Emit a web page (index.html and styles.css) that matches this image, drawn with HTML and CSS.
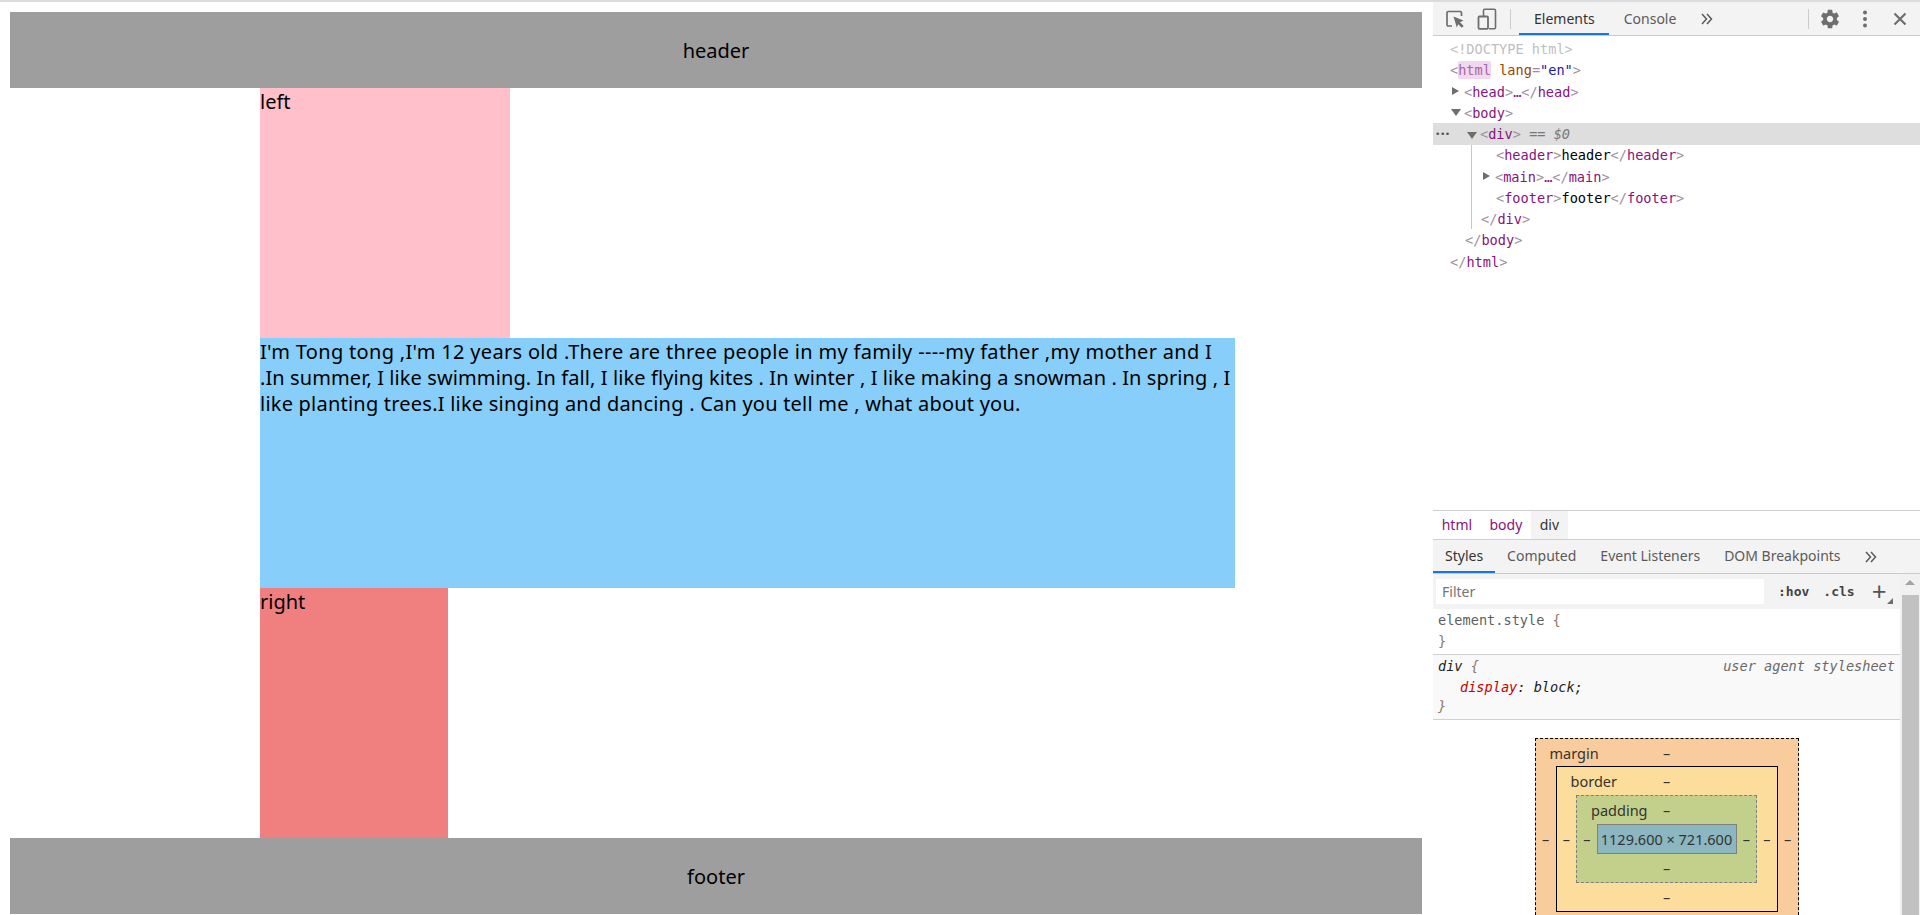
FILE: index.html
```html
<!DOCTYPE html>
<html lang="en">
<head>
    <meta charset="UTF-8">
    <meta name="viewport" content="width=device-width, initial-scale=1.0">
    <title>Document</title>
    <link rel="stylesheet" href="styles.css">
</head>
<body>
    <div class="top_strip"></div>
    <div class="window">
        <!-- page on the left -->
        <div class="page">
            <header class="page_bar">header</header>
            <main class="page_main">
                <div class="left">left</div>
                <div class="middle">
                    <span class="line line1">I'm Tong tong ,I'm 12 years old .There are three people in my family ----my father ,my mother and I</span>
                    <span class="line line2">.In summer, I like swimming. In fall, I like flying kites . In winter , I like making a snowman . In spring , I</span>
                    <span class="line line3">like planting trees.I like singing and dancing . Can you tell me , what about you.</span>
                </div>
                <div class="right">right</div>
            </main>
            <footer class="page_bar">footer</footer>
        </div>

        <!-- devtools on the right -->
        <div class="devtools">
            <div class="toolbar">
                <svg class="tool_icon inspect_icon" width="20" height="20" viewBox="0 0 20 20">
                    <path d="M7 17H3.2C2.5 17 2 16.500 2 15.800V3.700C2 3 2.500 2.500 3.200 2.500H15.300C16 2.500 16.500 3 16.500 3.700V7" fill="none" stroke="#6e6e6e" stroke-width="1.700"/>
                    <path d="M8.500 7.500L18.500 11.500L15 13.300L18.700 17L16.800 18.800L13.200 15.200L11.800 18.500Z" fill="#6e6e6e"/>
                </svg>
                <svg class="tool_icon device_icon" width="20" height="22" viewBox="0 0 20 22">
                    <path d="M6.500 8V2.500C6.500 1.800 7 1.200 7.700 1.200H17.300C18 1.200 18.500 1.800 18.500 2.500V19.500C18.500 20.200 18 20.800 17.300 20.800H12" fill="none" stroke="#6e6e6e" stroke-width="1.600"/>
                    <rect x="1.500" y="8.500" width="9.500" height="12.300" rx="1" fill="none" stroke="#6e6e6e" stroke-width="1.800"/>
                </svg>
                <span class="tool_sep"></span>
                <span class="tab tab_active main_tab">Elements</span>
                <span class="tab main_tab">Console</span>
                <svg class="more_icon" width="12" height="12" viewBox="0 0 12 12">
                    <path d="M1 1L5.500 6L1 11M6 1L10.500 6L6 11" fill="none" stroke="#5a5a5a" stroke-width="1.500"/>
                </svg>
                <span class="tool_sep sep_right"></span>
                <svg class="gear_icon" width="22" height="22" viewBox="0 0 24 24">
                    <path fill="#6e6e6e" d="M19.400 13c.04-.33.1-.66.1-1s-.06-.67-.1-1l2.100-1.650c.2-.15.25-.42.120-.64l-2-3.460c-.12-.22-.4-.3-.6-.22l-2.500 1c-.52-.4-1.080-.73-1.690-.98l-.38-2.650C14.460 2.180 14.250 2 14 2h-4c-.25 0-.46.180-.49.420l-.38 2.650c-.61.250-1.170.590-1.690.98l-2.490-1c-.23-.09-.490 0-.61.220l-2 3.460c-.13.220-.07.490.120.640L4.600 11c-.04.330-.1.670-.1 1s.06.670.1 1l-2.100 1.650c-.19.150-.25.420-.12.640l2 3.460c.12.220.39.300.61.220l2.490-1c.52.400 1.080.730 1.690.980l.38 2.650c.03.240.240.420.490.420h4c.25 0 .460-.180.490-.420l.38-2.650c.610-.250 1.170-.590 1.690-.980l2.490 1c.23.090.490 0 .610-.220l2-3.460c.120-.220.070-.490-.120-.640zM12 15.500c-1.930 0-3.500-1.570-3.500-3.500s1.570-3.500 3.500-3.500 3.500 1.570 3.500 3.500-1.570 3.500-3.500 3.500z"/>
                </svg>
                <svg class="dots_icon" width="6" height="18" viewBox="0 0 6 18">
                    <circle cx="3" cy="2.500" r="2" fill="#6e6e6e"/>
                    <circle cx="3" cy="9" r="2" fill="#6e6e6e"/>
                    <circle cx="3" cy="15.500" r="2" fill="#6e6e6e"/>
                </svg>
                <svg class="close_icon" width="14" height="14" viewBox="0 0 14 14">
                    <path d="M1.500 1.500L12.500 12.500M12.500 1.500L1.500 12.500" stroke="#6e6e6e" stroke-width="2.200" fill="none"/>
                </svg>
            </div>

            <div class="dom_tree">
                <div class="row"><span class="doctype">&lt;!DOCTYPE html&gt;</span></div>
                <div class="row"><span class="br">&lt;</span><span class="tag html_mark">html</span> <span class="attr">lang</span><span class="br">=</span><span class="val">"en"</span><span class="br">&gt;</span></div>
                <div class="row depth1"><i class="arrow_right"></i><span class="br">&lt;</span><span class="tag">head</span><span class="br">&gt;</span><span class="tag">…</span><span class="br">&lt;/</span><span class="tag">head</span><span class="br">&gt;</span></div>
                <div class="row depth1"><i class="arrow_down"></i><span class="br">&lt;</span><span class="tag">body</span><span class="br">&gt;</span></div>
                <div class="row depth2 selected"><span class="row_dots">•••</span><i class="arrow_down"></i><span class="br">&lt;</span><span class="tag">div</span><span class="br">&gt;</span> <span class="eq">== $0</span></div>
                <div class="dom_children">
                    <div class="row child"><span class="br">&lt;</span><span class="tag">header</span><span class="br">&gt;</span>header<span class="br">&lt;/</span><span class="tag">header</span><span class="br">&gt;</span></div>
                    <div class="row child child_arrow"><i class="arrow_right"></i><span class="br">&lt;</span><span class="tag">main</span><span class="br">&gt;</span><span class="tag">…</span><span class="br">&lt;/</span><span class="tag">main</span><span class="br">&gt;</span></div>
                    <div class="row child"><span class="br">&lt;</span><span class="tag">footer</span><span class="br">&gt;</span>footer<span class="br">&lt;/</span><span class="tag">footer</span><span class="br">&gt;</span></div>
                    <div class="row child_close"><span class="br">&lt;/</span><span class="tag">div</span><span class="br">&gt;</span></div>
                </div>
                <div class="row depth1 body_close"><span class="br">&lt;/</span><span class="tag">body</span><span class="br">&gt;</span></div>
                <div class="row"><span class="br">&lt;/</span><span class="tag">html</span><span class="br">&gt;</span></div>
            </div>

            <div class="crumbs">
                <span class="crumb">html</span>
                <span class="crumb">body</span>
                <span class="crumb crumb_active">div</span>
            </div>

            <div class="side_tabs">
                <span class="tab tab_active side_tab">Styles</span>
                <span class="tab side_tab">Computed</span>
                <span class="tab side_tab">Event Listeners</span>
                <span class="tab side_tab">DOM Breakpoints</span>
                <svg class="more_icon" width="12" height="12" viewBox="0 0 12 12">
                    <path d="M1 1L5.500 6L1 11M6 1L10.500 6L6 11" fill="none" stroke="#5a5a5a" stroke-width="1.500"/>
                </svg>
            </div>

            <div class="styles_pane">
                <div class="styles_content">
                    <div class="filter_bar">
                        <div class="filter_input">Filter</div>
                        <span class="filter_btn">:hov</span>
                        <span class="filter_btn">.cls</span>
                        <span class="filter_plus">+</span>
                        <i class="filter_corner"></i>
                    </div>
                    <div class="rule">
                        <div class="code">element.style <span class="brace">{</span></div>
                        <div class="code brace">}</div>
                    </div>
                    <div class="rule rule_ua">
                        <div class="code rule_head"><span>div <span class="brace">{</span></span><span class="ua_label">user agent stylesheet</span></div>
                        <div class="code prop_line"><span class="prop">display</span>: block;</div>
                        <div class="code brace">}</div>
                    </div>
                    <div class="box_wrap">
                        <div class="box box_margin">
                            <div class="box_row"><span class="box_label">margin</span>–</div>
                            <div class="box_mid">
                                <span class="box_side">–</span>
                                <div class="box box_border">
                                    <div class="box_row"><span class="box_label">border</span>–</div>
                                    <div class="box_mid">
                                        <span class="box_side">–</span>
                                        <div class="box box_padding">
                                            <div class="box_row"><span class="box_label">padding</span>–</div>
                                            <div class="box_mid">
                                                <span class="box_side">–</span>
                                                <div class="box_content">1129.600 × 721.600</div>
                                                <span class="box_side">–</span>
                                            </div>
                                            <div class="box_row">–</div>
                                        </div>
                                        <span class="box_side">–</span>
                                    </div>
                                    <div class="box_row">–</div>
                                </div>
                                <span class="box_side">–</span>
                            </div>
                            <div class="box_row"></div>
                        </div>
                    </div>
                </div>
                <div class="scrollbar">
                    <i class="scroll_up"></i>
                    <div class="scroll_thumb"></div>
                </div>
            </div>
        </div>
    </div>
</body>
</html>
```

FILE: styles.css
```css
* {
    box-sizing: border-box;
}
html,
body {
    margin: 0;
    height: 915px;
    overflow: hidden;
    background-color: #fff;
}
.top_strip {
    height: 2px;
    background-color: #dcdce0;
}
.window {
    display: flex;
    height: 913px;
}

/* 左边页面 */
.page {
    width: 1433px;
    padding: 10px 11px 0 10px;
    font-family: "Noto Sans", "Noto Sans CJK SC", sans-serif;
    font-size: 20px;
    color: #000;
}
.page_bar {
    height: 76px;
    padding-top: 1px;
    line-height: 76px;
    text-align: center;
    background-color: #9e9e9e;
}
.page_main {
    display: flex;
    flex-direction: column;
    padding-left: 250px;
    line-height: 26px;
}
.left {
    width: 250px;
    height: 250px;
    padding-top: 1px;
    background-color: pink;
}
.middle {
    width: 975px;
    height: 250px;
    padding-top: 1px;
    background-color: lightskyblue;
}
.line {
    display: block;
    white-space: nowrap;
}
.line1 {
    letter-spacing: 0.31px;
}
.line2 {
    letter-spacing: 0.1px;
}
.line3 {
    letter-spacing: 0.22px;
}
.right {
    width: 188px;
    height: 250px;
    padding-top: 1px;
    background-color: lightcoral;
}

/* 右边 devtools */
.devtools {
    width: 487px;
    display: flex;
    flex-direction: column;
    font-family: "Noto Sans", "Open Sans", sans-serif;
    font-size: 14px;
    color: #5a5a5a;
}
.toolbar {
    flex: none;
    height: 34px;
    display: flex;
    align-items: center;
    background-color: #f3f3f3;
    border-bottom: 1px solid #ccc;
}
.inspect_icon {
    margin-left: 12px;
}
.device_icon {
    margin-left: 12px;
}
.tool_sep {
    width: 1px;
    height: 20px;
    margin-left: 13px;
    margin-right: 8px;
    background-color: #ccc;
}
.sep_right {
    margin-left: 95px;
    margin-right: 10px;
}
.tab {
    height: 100%;
    white-space: nowrap;
}
.tab_active {
    color: #333;
    border-bottom: 2px solid #1a73e8;
}
.main_tab {
    padding: 0 15px;
    line-height: 33px;
}
.main_tab.tab_active {
    padding-right: 14px;
}
.more_icon {
    margin-left: 10px;
}
.dots_icon {
    margin-left: 21px;
}
.close_icon {
    margin-left: 25px;
}

.dom_tree {
    flex: none;
    height: 474px;
    padding-top: 2px;
    font-family: "DejaVu Sans Mono", monospace;
    font-size: 13.6px;
}
.row {
    position: relative;
    height: 21.25px;
    line-height: 23.75px;
    padding-left: 17px;
    white-space: pre;
    color: #000;
}
.depth1 {
    padding-left: 31px;
}
.body_close {
    padding-left: 32px;
}
.depth2 {
    padding-left: 47px;
}
.dom_children {
    margin-left: 38px;
    border-left: 1px solid #b9c8e8;
}
.child {
    padding-left: 24px;
}
.child_arrow {
    padding-left: 23px;
}
.child_close {
    padding-left: 9px;
}
.selected {
    height: 22px;
    margin-bottom: -0.75px;
    background-color: #dedede;
}
.row_dots {
    position: absolute;
    left: 2px;
    top: 0;
    font-size: 9px;
    letter-spacing: -0.5px;
    color: #555;
}
.doctype {
    color: #c0c0c0;
}
.br {
    color: #a08ea0;
}
.tag {
    color: #881280;
}
.html_mark {
    padding: 1px 0;
    background-color: #f3d6ef;
    border-radius: 2px;
    color: #a06a9c;
}
.attr {
    color: #994500;
}
.val {
    color: #1a1aa6;
}
.eq {
    font-style: italic;
    color: #777;
}
.arrow_right,
.arrow_down {
    position: absolute;
    width: 0;
    height: 0;
}
.arrow_right {
    margin-left: -12px;
    margin-top: 6px;
    border-top: 4.5px solid transparent;
    border-bottom: 4.5px solid transparent;
    border-left: 7px solid #6e6e6e;
}
.arrow_down {
    margin-left: -13px;
    margin-top: 7px;
    border-left: 5px solid transparent;
    border-right: 5px solid transparent;
    border-top: 7px solid #6e6e6e;
}
.selected .arrow_down {
    margin-top: 9px;
}

.crumbs {
    flex: none;
    height: 30px;
    display: flex;
    border-top: 1px solid #d0d0d0;
    border-bottom: 1px solid #d0d0d0;
    line-height: 28px;
}
.crumb {
    padding: 0 8.7px;
    color: #881280;
}
.crumb_active {
    color: #333;
    background-color: #f3f3f3;
}
.side_tabs {
    flex: none;
    height: 34px;
    display: flex;
    align-items: center;
    background-color: #f3f3f3;
    border-bottom: 1px solid #ccc;
}
.side_tab {
    padding: 0 12px;
    line-height: 32px;
}
.side_tabs .more_icon {
    margin-left: 12px;
}

.styles_pane {
    flex: none;
    height: 341px;
    display: flex;
    overflow: hidden;
}
.styles_content {
    width: 467px;
}
.filter_bar {
    position: relative;
    height: 34px;
    display: flex;
    align-items: center;
    padding-left: 3px;
    background-color: #f3f3f3;
}
.filter_input {
    width: 328px;
    height: 25px;
    padding-left: 6px;
    line-height: 25px;
    background-color: #fff;
    color: #757575;
}
.filter_btn {
    margin-left: 14px;
    font-family: "DejaVu Sans Mono", monospace;
    font-size: 13px;
    font-weight: bold;
    color: #444;
}
.filter_plus {
    margin-left: 17px;
    font-size: 26px;
    line-height: 24px;
    color: #555;
}
.filter_corner {
    position: absolute;
    right: 7px;
    bottom: 4px;
    width: 0;
    height: 0;
    border-left: 6px solid transparent;
    border-bottom: 6px solid #6e6e6e;
}
.rule {
    height: 47px;
    padding: 1px 5px 0;
    border-top: 1px solid #f3f3f3;
    border-bottom: 1px solid #d0d0d0;
    font-family: "DejaVu Sans Mono", monospace;
    font-size: 13.6px;
}
.rule_ua {
    height: 65px;
    padding-top: 1px;
    border-top: 0;
    background-color: #f9f9f9;
    font-style: italic;
}
.code {
    height: 21px;
    line-height: 21px;
    color: #5f5f5f;
}
.rule_ua .code:last-child {
    height: 17px;
    line-height: 17px;
}
.brace {
    color: #8a7a66;
}
.rule_head {
    display: flex;
    justify-content: space-between;
    color: #222;
}
.ua_label {
    color: #6a6a6a;
}
.prop_line {
    padding-left: 22px;
    color: #222;
}
.prop {
    color: #c80000;
}
.box_wrap {
    display: flex;
    justify-content: center;
    padding-top: 18px;
    font-size: 14.5px;
    color: #333;
}
.box {
    flex: none;
}
.box_margin {
    width: 264px;
    border: 1px dashed #000;
    background-color: #f9cc9d;
}
.box_border {
    width: 222px;
    border: 1px solid #000;
    background-color: #fddd9b;
}
.box_padding {
    width: 181px;
    border: 1px dashed #808080;
    background-color: #c3d08b;
}
.box_row {
    position: relative;
    height: 28px;
    line-height: 28px;
    text-align: center;
}
.box_margin > .box_row {
    height: 27px;
    line-height: 29px;
}
.box_label {
    position: absolute;
    left: 14px;
    top: 0;
}
.box_mid {
    display: flex;
    align-items: center;
    justify-content: space-between;
}
.box_side {
    flex: 1;
    text-align: center;
}
.box_content {
    width: 140px;
    height: 30px;
    line-height: 28px;
    text-align: center;
    white-space: nowrap;
    border: 1px solid #808080;
    background-color: #8cb6c0;
}
.scrollbar {
    width: 20px;
    display: flex;
    flex-direction: column;
    align-items: center;
    background-color: #f1f1f1;
}
.scroll_up {
    flex: none;
    width: 0;
    height: 0;
    margin-top: 6px;
    border-left: 5px solid transparent;
    border-right: 5px solid transparent;
    border-bottom: 5px solid #a3a3a3;
}
.scroll_thumb {
    flex: 1;
    width: 17px;
    margin-top: 10px;
    background-color: #c1c1c1;
}
```
